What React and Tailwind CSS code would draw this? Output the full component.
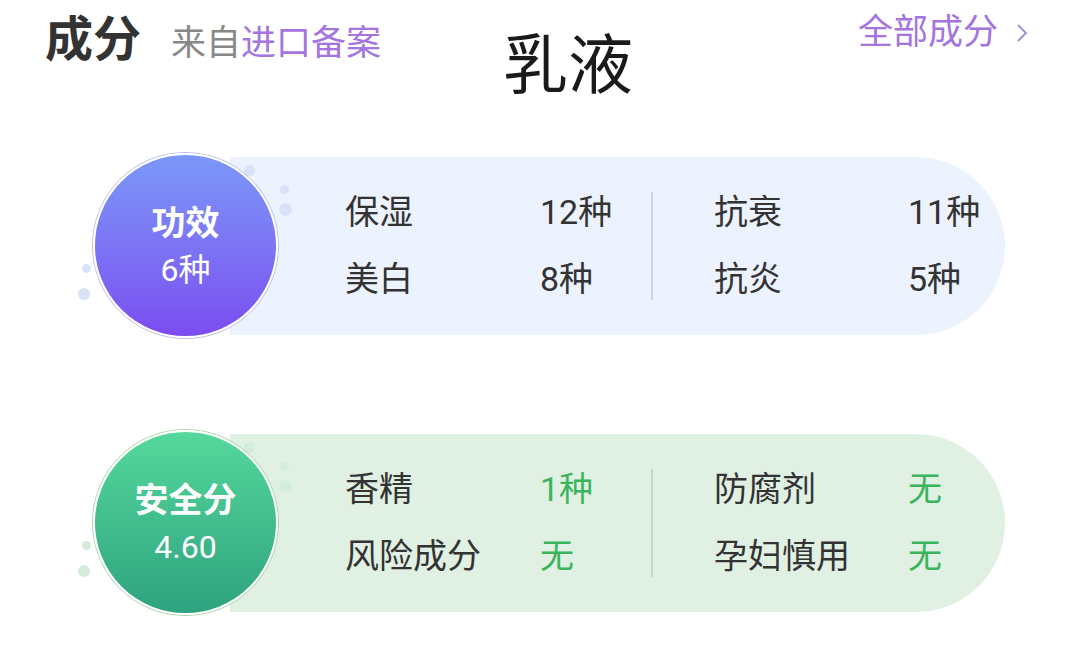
import React from "react";

const FONT = { fontFamily: "Roboto, 'Noto Sans CJK SC', sans-serif" };

function Dots({ color }) {
  return (
    <>
      <span className={`absolute left-[244px] top-[12px] w-[11px] h-[11px] rounded-full ${color}`} />
      <span className={`absolute left-[280px] top-[32px] w-[9px] h-[9px] rounded-full ${color}`} />
      <span className={`absolute left-[279px] top-[50px] w-[13px] h-[13px] rounded-full ${color}`} />
      <span className={`absolute left-[82px] top-[111px] w-[9px] h-[9px] rounded-full ${color}`} />
      <span className={`absolute left-[78px] top-[135px] w-[12px] h-[12px] rounded-full ${color}`} />
    </>
  );
}

function Card({ title, value, rows, circleClass, pillClass, dotClass, valueClass, dividerClass }) {
  return (
    <div className="relative flex items-center h-[185px] pl-[93px]">
      <Dots color={dotClass} />
      <div
        className={`relative z-10 w-[185px] h-[185px] shrink-0 rounded-full border-2 border-white flex flex-col items-center justify-center text-white ${circleClass}`}
      >
        <div className="text-[34px] font-bold leading-none">{title}</div>
        <div className="text-[32px] leading-none mt-[14px]">{value}</div>
      </div>
      <div className={`-ml-[48px] w-[775px] h-[178px] rounded-r-full flex items-center pl-[115px] ${pillClass}`}>
        <div className="flex flex-col gap-[32px]">
          {rows.map((r, i) => (
            <div key={i} className="flex items-center h-[35px] text-[34px] leading-none">
              <span className="w-[195px] text-[#333333]">{r[0]}</span>
              <span className={`w-[111px] ${valueClass}`}>{r[1]}</span>
            </div>
          ))}
        </div>
        <div className={`w-[2px] h-[108px] ${dividerClass}`} />
        <div className="flex flex-col gap-[32px] ml-[61px]">
          {rows.map((r, i) => (
            <div key={i} className="flex items-center h-[35px] text-[34px] leading-none">
              <span className="w-[194px] text-[#333333]">{r[2]}</span>
              <span className={valueClass}>{r[3]}</span>
            </div>
          ))}
        </div>
      </div>
    </div>
  );
}

export default function App() {
  return (
    <div className="w-[1080px] h-[663px] bg-white overflow-hidden" style={FONT}>
      <div className="flex items-start h-[153px]">
        <div className="w-[503px] pl-[45px] pt-[16px] flex items-end">
          <span className="text-[48px] font-bold leading-none text-[#333333]">成分</span>
          <span className="ml-[30px] text-[35px] leading-none text-[#888888] mb-[3px]">
            来自<span className="text-[#a474e0]">进口备案</span>
          </span>
        </div>
        <div className="pt-[34px] text-[65px] leading-none text-[#1a1a1a]">乳液</div>
        <div className="ml-auto pr-[52px] pt-[15px] flex items-center">
          <span className="text-[35px] leading-none text-[#a474e0]">全部成分</span>
          <svg className="ml-[18px]" width="12" height="20" viewBox="0 0 12 20">
            <path d="M2 2 L10 10 L2 18" fill="none" stroke="#a58ad8" strokeWidth="1.8" />
          </svg>
        </div>
      </div>
      <Card
        title="功效"
        value="6种"
        circleClass="bg-gradient-to-b from-[#7a97f8] to-[#7b4cf0] shadow-[0_0_0_1px_#b9c0ec]"
        pillClass="bg-[#ecf2fe]"
        dotClass="bg-[#d9e2f8]"
        valueClass="text-[#333333]"
        dividerClass="bg-[#c7d6ec]"
        rows={[
          ["保湿", "12种", "抗衰", "11种"],
          ["美白", "8种", "抗炎", "5种"],
        ]}
      />
      <div className="h-[92px]" />
      <Card
        title="安全分"
        value="4.60"
        circleClass="bg-gradient-to-b from-[#55d89c] to-[#2ea37f] shadow-[0_0_0_1px_#a9d7a9]"
        pillClass="bg-[#e0f0e2]"
        dotClass="bg-[#d3eddb]"
        valueClass="text-[#3cb45e]"
        dividerClass="bg-[#b9dcc2]"
        rows={[
          ["香精", "1种", "防腐剂", "无"],
          ["风险成分", "无", "孕妇慎用", "无"],
        ]}
      />
    </div>
  );
}
